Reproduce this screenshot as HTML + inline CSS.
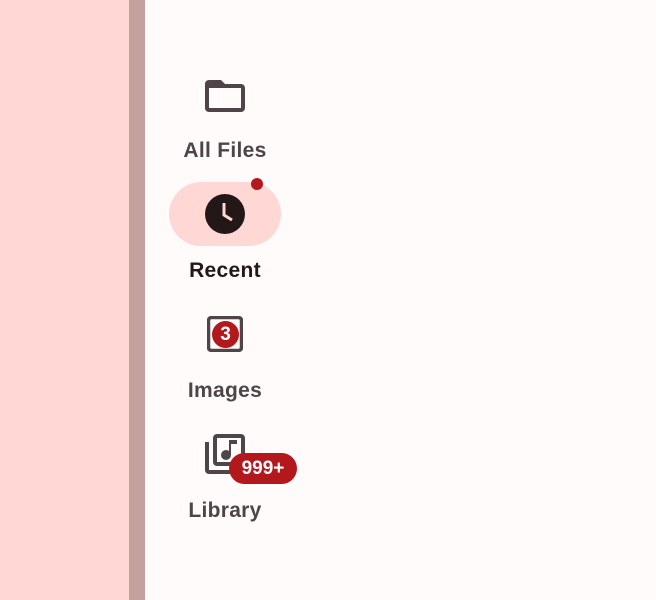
<!DOCTYPE html>
<html><head><style>
body{margin:0;width:656px;height:600px;position:relative;background:#fffbfb;font-family:"Liberation Sans",sans-serif;overflow:hidden}
.l{position:absolute;left:0;top:0;width:129px;height:600px;background:#ffd8d6}
.s{position:absolute;left:129px;top:0;width:16px;height:600px;background:#c4a09f}
.t{position:absolute;left:145px;width:160px;text-align:center;font-size:21px;font-weight:bold;color:#4f4447;letter-spacing:0.3px}
.pill{position:absolute;left:169px;top:182px;width:112px;height:64px;border-radius:32px;background:#ffd8d6}
.badge{position:absolute;background:#b3191c;color:#fff;font-size:19px;text-align:center;font-weight:bold}
</style></head><body>
<div class="l"></div><div class="s"></div>
<svg style="position:absolute;left:201px;top:72px" width="48" height="48" viewBox="0 0 24 24"><path fill="#4f4447" d="M20 6h-8l-2-2H4c-1.1 0-2 .9-2 2v12c0 1.1.9 2 2 2h16c1.1 0 2-.9 2-2V8c0-1.1-.9-2-2-2zm0 12H4V8h16v10z"/></svg>
<div class="t" style="top:139px">All Files</div>
<div class="pill"></div>
<svg style="position:absolute;left:205px;top:194px" width="40" height="40" viewBox="0 0 40 40"><circle cx="20" cy="20" r="20" fill="#231718"/><path d="M19 9v12l8 5" stroke="#ffd8d6" stroke-width="3" fill="none"/></svg>
<div class="badge" style="left:251px;top:178px;width:12px;height:12px;border-radius:6px"></div>
<div class="t" style="top:259px;color:#231718">Recent</div>
<svg style="position:absolute;left:207px;top:316px" width="36" height="36" viewBox="0 0 36 36"><rect x="1.5" y="1.5" width="33" height="33" rx="3" fill="none" stroke="#4f4447" stroke-width="3.5"/></svg>
<div class="badge" style="left:212px;top:321px;width:27px;height:27px;border-radius:14px;line-height:27px">3</div>
<div class="t" style="top:379px">Images</div>
<svg style="position:absolute;left:201px;top:430px" width="48" height="48" viewBox="0 0 24 24"><path fill="#4f4447" d="M20 2H8c-1.1 0-2 .9-2 2v12c0 1.1.9 2 2 2h12c1.1 0 2-.9 2-2V4c0-1.1-.9-2-2-2zm0 14H8V4h12v12zm-7.5-1a2.5 2.5 0 0 0 2.5-2.5V7h3V5h-4v5.51c-.42-.32-.93-.51-1.5-.51a2.5 2.5 0 0 0 0 5zM4 6H2v14c0 1.1.9 2 2 2h14v-2H4V6z"/></svg>
<div class="badge" style="left:229px;top:453px;width:68px;height:31px;border-radius:16px;line-height:31px">999+</div>
<div class="t" style="top:499px">Library</div>
</body></html>
